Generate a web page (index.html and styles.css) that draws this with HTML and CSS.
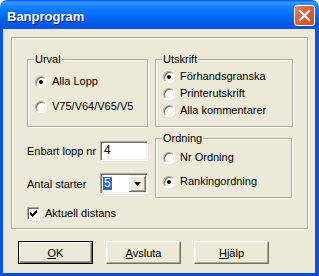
FILE: index.html
```html
<!DOCTYPE html>
<html lang="sv">
<head>
    <meta charset="UTF-8">
    <title>Banprogram</title>
    <link rel="stylesheet" href="styles.css">
</head>
<body>
<div class="window">
    <div class="titlebar">
        <span class="title">Banprogram</span>
        <span class="close">
            <svg width="19" height="19" viewBox="0 0 19 19"><path d="M5 5L14 14M14 5L5 14" stroke="#fff" stroke-width="2.2" stroke-linecap="square"/></svg>
        </span>
    </div>
    <div class="client">
        <div class="panel">
            <div class="col col-left">
                <div class="group urval">
                    <span class="legend">Urval</span>
                    <div class="option"><span class="radio checked"></span>Alla Lopp</div>
                    <div class="option"><span class="radio"></span>V75/V64/V65/V5</div>
                </div>
                <div class="field">
                    <span>Enbart lopp nr</span>
                    <span class="textbox">4</span>
                </div>
                <div class="field field-combo">
                    <span>Antal starter</span>
                    <span class="combo">
                        <span class="combo-value"><span class="sel">5</span></span>
                        <span class="combo-btn">
                            <svg width="7" height="4" viewBox="0 0 7 4"><path d="M0 0H7L3.5 4Z" fill="#000"/></svg>
                        </span>
                    </span>
                </div>
                <div class="option check-row">
                    <span class="checkbox">
                        <svg width="11" height="11" viewBox="0 0 11 11"><path d="M2 4h1v3h-1zM3 5h1v3h-1zM4 6h1v3h-1zM5 5h1v3h-1zM6 4h1v3h-1zM7 3h1v3h-1zM8 2h1v3h-1z" fill="#000"/></svg>
                    </span>
                    Aktuell distans
                </div>
            </div>
            <div class="col col-right">
                <div class="group utskrift">
                    <span class="legend">Utskrift</span>
                    <div class="option"><span class="radio checked"></span>Förhandsgranska</div>
                    <div class="option"><span class="radio"></span>Printerutskrift</div>
                    <div class="option"><span class="radio"></span>Alla kommentarer</div>
                </div>
                <div class="group ordning">
                    <span class="legend">Ordning</span>
                    <div class="option"><span class="radio"></span>Nr Ordning</div>
                    <div class="option"><span class="radio checked"></span>Rankingordning</div>
                </div>
            </div>
        </div>
        <div class="buttons">
            <button class="btn default"><u>O</u>K</button>
            <button class="btn"><u>A</u>vsluta</button>
            <button class="btn"><u>H</u>jälp</button>
        </div>
    </div>
</div>
</body>
</html>
```

FILE: styles.css
```css
html, body {
    margin: 0;
    background: #fff;
}
.window {
    width: 319px;
    height: 276px;
    display: flex;
    flex-direction: column;
    font-family: "Liberation Sans", Arial, sans-serif;
    font-size: 11px;
    color: #000;
}
.titlebar {
    height: 29px;
    flex-shrink: 0;
    display: flex;
    align-items: flex-start;
    padding: 0 4px 0 7px;
    border-radius: 7px 7px 0 0;
    background: linear-gradient(to bottom, #0058ee 0%, #3a93ff 8%, #288eff 14%, #127dff 28%, #036ffc 50%, #0262ee 70%, #0057e5 86%, #0054e3 100%);
}
.title {
    margin-top: 9px;
    line-height: 16px;
    font-size: 13px;
    font-weight: bold;
    color: #fff;
    text-shadow: 1px 1px 0 #0a1883;
}
.close {
    margin: 5px 0 0 auto;
    width: 21px;
    height: 21px;
    box-sizing: border-box;
    border: 1px solid #fff;
    border-radius: 3px;
    background: linear-gradient(135deg, #ec8a6c 0%, #e2603b 35%, #d24a22 100%);
    display: flex;
}
.client {
    flex: 1;
    background: #ece9d8;
    border-left: 3px solid #0b52e0;
    border-right: 4px solid #0b52e0;
    border-bottom: 3px solid #0a4bd8;
}
.panel {
    margin: 8px 0 0 8px;
    width: 297px;
    height: 192px;
    box-sizing: border-box;
    border: 1px solid #aca899;
    box-shadow: 1px 1px 0 #fff, inset 1px 1px 0 #fff;
    padding: 21px 0 0 15px;
    display: flex;
    gap: 7px;
}
.col {
    display: flex;
    flex-direction: column;
}
.col-left {
    width: 121px;
}
.col-right {
    width: 138px;
}
.group {
    box-sizing: border-box;
    border: 1px solid #aca899;
    box-shadow: 1px 1px 0 #fff, inset 1px 1px 0 #fff;
    display: flex;
    flex-direction: column;
    align-items: flex-start;
    padding-left: 7px;
}
.legend {
    margin: -7px 0 0 -1px;
    padding: 0 1px;
    line-height: 13px;
    background: #ece9d8;
}
.urval {
    height: 68px;
}
.urval .option:nth-of-type(1) {
    margin-top: 9px;
}
.urval .option + .option {
    margin-top: 12px;
}
.utskrift {
    height: 68px;
}
.utskrift .option:nth-of-type(1) {
    margin-top: 4px;
}
.utskrift .option + .option {
    margin-top: 4px;
}
.ordning {
    width: 137px;
    height: 60px;
    margin-top: 11px;
}
.ordning .option:nth-of-type(1) {
    margin-top: 6px;
}
.ordning .option + .option {
    margin-top: 11px;
}
.option {
    display: flex;
    align-items: center;
    height: 13px;
    line-height: 13px;
    white-space: nowrap;
}
.radio {
    width: 12px;
    height: 12px;
    box-sizing: border-box;
    margin-right: 5px;
    border-radius: 50%;
    border: 1px solid;
    border-color: #aca899 #fff #fff #aca899;
    box-shadow: inset 1px 1px 0 #716f64, inset -1px -1px 0 #f1efe2;
    background: #fff;
    display: flex;
    align-items: center;
    justify-content: center;
}
.radio.checked::after {
    content: "";
    width: 4px;
    height: 4px;
    border-radius: 50%;
    background: #000;
}
.field {
    display: flex;
    align-items: center;
    justify-content: space-between;
    margin-top: 14px;
    height: 20px;
}
.field-combo {
    margin-top: 12px;
    height: 21px;
}
.textbox {
    width: 48px;
    height: 20px;
    box-sizing: border-box;
    padding-left: 3px;
    line-height: 17px;
    font-size: 12px;
    background: #fff;
    border: 1px solid;
    border-color: #aca899 #fff #fff #aca899;
    box-shadow: inset 1px 1px 0 #716f64, inset -1px -1px 0 #f1efe2;
}
.combo {
    width: 48px;
    height: 21px;
    box-sizing: border-box;
    padding: 1px;
    background: #fff;
    border: 1px solid;
    border-color: #aca899 #fff #fff #aca899;
    box-shadow: inset 1px 1px 0 #716f64, inset -1px -1px 0 #f1efe2;
    display: flex;
}
.combo-value {
    flex: 1;
    display: flex;
    align-items: center;
}
.sel {
    margin-left: 1px;
    padding: 0 1px;
    line-height: 13px;
    font-size: 12px;
    background: #316ac5;
    color: #fff;
}
.combo-btn {
    width: 17px;
    height: 17px;
    box-sizing: border-box;
    background: #ece9d8;
    border: 1px solid;
    border-color: #f1efe2 #716f64 #716f64 #f1efe2;
    box-shadow: inset 1px 1px 0 #fff, inset -1px -1px 0 #aca899;
    display: flex;
    align-items: center;
    justify-content: center;
}
.check-row {
    margin-top: 13px;
}
.checkbox {
    width: 13px;
    height: 13px;
    box-sizing: border-box;
    margin-right: 5px;
    background: #fff;
    border: 1px solid;
    border-color: #aca899 #fff #fff #aca899;
    box-shadow: inset 1px 1px 0 #716f64, inset -1px -1px 0 #f1efe2;
}
.checkbox svg {
    display: block;
}
.buttons {
    display: flex;
    gap: 13px;
    margin-top: 12px;
    padding-left: 15px;
}
.btn {
    width: 75px;
    height: 23px;
    box-sizing: border-box;
    padding: 0;
    font-family: inherit;
    font-size: 11px;
    color: #000;
    background: #ece9d8;
    border: 1px solid;
    border-color: #fff #716f64 #716f64 #fff;
    box-shadow: inset -1px -1px 0 #aca899, inset 1px 1px 0 #f1efe2;
}
.btn.default {
    border: 1px solid #000;
    box-shadow: inset 1px 1px 0 #fff, inset -1px -1px 0 #716f64, inset -2px -2px 0 #aca899;
}
```
